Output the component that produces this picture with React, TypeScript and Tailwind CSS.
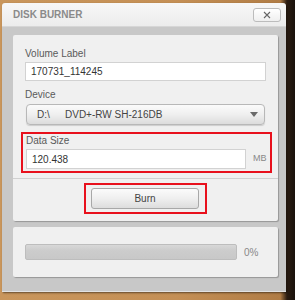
import React from "react";

export default function App() {
  const font = { fontFamily: '"Liberation Sans", Arial, sans-serif' };
  return (
    <div
      className="w-[295px] h-[300px] overflow-hidden bg-[linear-gradient(90deg,#c9965c_0%,#c48f55_60%,#b07c45_95%,#2a1c12_97.3%,#1a120c_100%)]"
      style={font}
    >
      <div className="ml-[2px] mt-[3px] w-[284px] h-[289px] flex flex-col rounded-t-[3px] overflow-hidden shadow-[1px_1px_2px_rgba(0,0,0,0.5)]">
        {/* Title bar */}
        <div className="h-[24px] flex items-center justify-between pl-[11px] pr-[5px] bg-[linear-gradient(180deg,#f7f7f7_0%,#ececec_100%)] border-b border-[#d6d6d6]">
          <span className="text-[10px] font-bold text-[#8a8a8a] leading-none mt-[1px]">DISK BURNER</span>
          <div className="w-[28px] h-[14px] rounded-[3px] border border-[#bcbcbc] bg-[linear-gradient(180deg,#ffffff_0%,#efefef_100%)] flex items-center justify-center">
            <svg width="8" height="8" viewBox="0 0 8 8">
              <path d="M1 1 L7 7 M7 1 L1 7" stroke="#666" strokeWidth="1.1" />
            </svg>
          </div>
        </div>
        {/* Body */}
        <div className="flex-1 bg-[#c8c8c8] pl-[11px] pr-[8px] pt-[8px] border-b border-[#e2e2e2]">
          {/* Panel 1 */}
          <div className="w-[265px] h-[186px] bg-[#f0f0f0] rounded-[2px] shadow-[1px_1px_1px_rgba(0,0,0,0.25)] flex flex-col">
            <div className="pl-[12px] pr-[12px] pt-[13px]">
              <div className="text-[10px] leading-[12px] text-[#5a5a5a]">Volume Label</div>
              <div className="mt-[2px] h-[19px] w-[241px] bg-white border border-[#d2d2d2] flex items-center pl-[5px] text-[10px] text-[#333]">
                170731_114245
              </div>
              <div className="mt-[8px] text-[10px] leading-[12px] text-[#5a5a5a]">Device</div>
              <div className="mt-[3px] ml-[1px] h-[21px] w-[239px] rounded-[4px] border border-[#b8b8b8] bg-[linear-gradient(180deg,#fbfbfb_0%,#efefef_50%,#dcdcdc_100%)] flex items-center text-[10px] text-[#444] shadow-[0_1px_1px_rgba(0,0,0,0.15)]">
                <span className="pl-[10px] w-[38px]">D:\</span>
                <span className="flex-1">DVD+-RW SH-216DB</span>
                <svg width="8" height="5" viewBox="0 0 8 5" className="mr-[6px]">
                  <path d="M0 0 L8 0 L4 5 Z" fill="#6a6a6a" />
                </svg>
              </div>
            </div>
            {/* Red box 1 */}
            <div className="mt-[7px] ml-[8px] w-[251px] h-[41px] border-2 border-[#e8101c] pl-[3px] pt-[1px]">
              <div className="text-[10px] leading-[12px] text-[#5a5a5a]">Data Size</div>
              <div className="mt-[2px] flex items-center">
                <div className="h-[20px] w-[220px] bg-white border border-[#d2d2d2] flex items-center pl-[5px] text-[10px] text-[#333]">
                  120.438
                </div>
                <span className="ml-[7px] text-[9px] text-[#888]">MB</span>
              </div>
            </div>
            <div className="mt-[5px] h-px bg-[#d0d0d0]" />
            <div className="flex justify-center pt-[4px]">
              <div className="w-[123px] h-[31px] border-2 border-[#e8101c] flex items-center justify-center ml-[-1px]">
                <div className="w-[108px] h-[21px] rounded-[3px] border border-[#a8a8a8] bg-[linear-gradient(180deg,#fbfbfb_0%,#efefef_50%,#dddddd_100%)] flex items-center justify-center text-[10px] text-[#444]">
                  Burn
                </div>
              </div>
            </div>
          </div>
          {/* Panel 2 */}
          <div className="mt-[6px] w-[265px] h-[50px] bg-[#f0f0f0] rounded-[2px] shadow-[1px_1px_1px_rgba(0,0,0,0.25)] flex items-center pl-[12px]">
            <div className="w-[212px] h-[16px] rounded-[2px] border border-[#bdbdbd] bg-[linear-gradient(180deg,#d8d8d8_0%,#cccccc_40%,#c8c8c8_100%)]" />
            <span className="ml-[7px] text-[10px] text-[#888]">0%</span>
          </div>
        </div>
      </div>
    </div>
  );
}
